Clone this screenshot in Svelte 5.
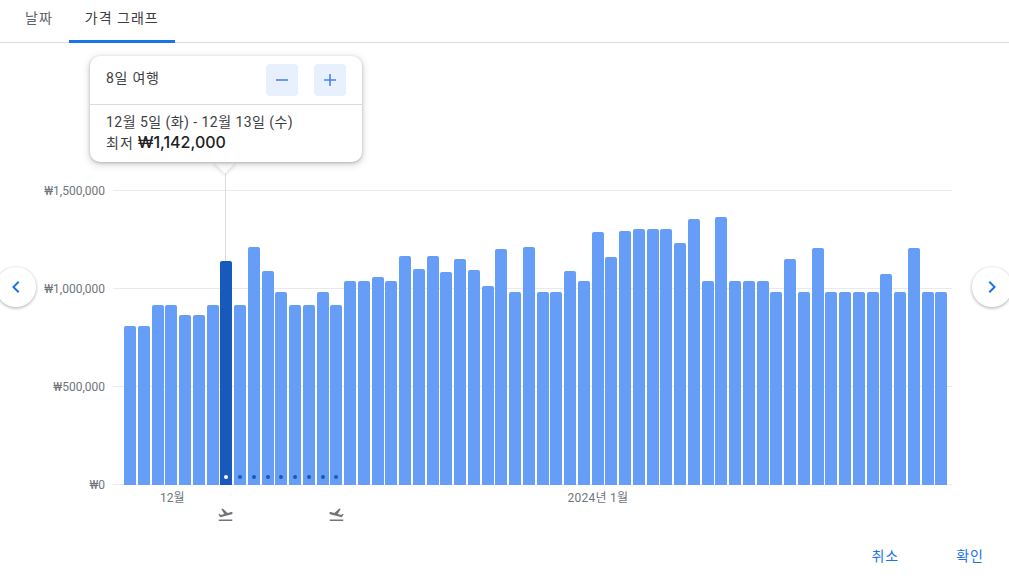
<script>
  const tops = [326,326,305,305,315,315,305,261,305,247,271,292,305,305,292,305,281,281,277,281,256,269,256,272,259,270,286,249,292,247,292,292,271,281,232,257,231,229,229,229,243,219,281,217,281,281,281,292,259,292,248,292,292,292,292,274,292,248,292,292];
  const bars = tops.map((t, i) => ({ h: 485 - t, sel: i === 7, dot: i >= 7 && i <= 15 }));
  const yLabels = ['₩1,500,000', '₩1,000,000', '₩500,000', '₩0'];
</script>

<div class="page">
  <nav class="tabs">
    <button class="tab">날짜</button>
    <button class="tab active">가격 그래프</button>
  </nav>

  <section class="chart">
    <div class="axis">
      {#each yLabels as l}
        <div class="ylabel">{l}</div>
      {/each}
    </div>
    <div class="plot">
      <div class="grid">
        {#each yLabels as l}<div class="gridline"></div>{/each}
      </div>
      <div class="bars">
        {#each bars as b}
          <div class="bar" class:sel={b.sel} style="height:{b.h}px">
            {#if b.dot}<span class="dot"></span>{/if}
          </div>
        {/each}
      </div>
      <div class="months">
        <span class="m1">12월</span>
        <span class="m2">2024년 1월</span>
      </div>
      <div class="planes">
        <svg class="plane" viewBox="0 0 24 24"><path d="M2.5 19h19v2h-19zm19.57-9.36c-.21-.8-1.04-1.28-1.84-1.06L14.92 10l-6.9-6.43-1.93.51 4.14 7.17-4.97 1.33-1.97-1.54-1.45.39 1.82 3.16.77 1.33 1.6-.43 5.31-1.42 4.35-1.16L21 11.49c.81-.23 1.28-1.05 1.07-1.85z"/></svg>
        <svg class="plane back" viewBox="0 0 24 24"><path d="M2.5 19h19v2h-19zm19.57-9.36c-.21-.8-1.04-1.28-1.84-1.06L14.92 10l-6.9-6.43-1.93.51 4.14 7.17-4.97 1.33-1.97-1.54-1.45.39 1.82 3.16.77 1.33 1.6-.43 5.31-1.42 4.35-1.16L21 11.49c.81-.23 1.28-1.05 1.07-1.85z"/></svg>
      </div>
    </div>
  </section>

  <footer class="foot">
    <button class="action">취소</button>
    <button class="action">확인</button>
  </footer>

  <div class="leader"></div>
  <div class="pop">
    <div class="pop-head">
      <span class="trip">8일 여행</span>
      <div class="steppers">
        <button class="step" aria-label="minus"><svg viewBox="0 0 12 12"><path d="M0 5.2h12v1.6H0z"/></svg></button>
        <button class="step" aria-label="plus"><svg viewBox="0 0 12 12"><path d="M5.2 0h1.6v5.2H12v1.6H6.8V12H5.2V6.8H0V5.2h5.2z"/></svg></button>
      </div>
    </div>
    <div class="pop-body">
      <div class="dates">12월 5일 (화) - 12월 13일 (수)</div>
      <div class="price-line"><span class="low">최저</span> <b>₩1,142,000</b></div>
    </div>
    <span class="arrow"></span>
  </div>

  <button class="nav left" aria-label="prev"><svg viewBox="0 0 24 24"><path d="M15.4 7.4 14 6l-6 6 6 6 1.4-1.4-4.6-4.6z"/></svg></button>
  <button class="nav right" aria-label="next"><svg viewBox="0 0 24 24"><path d="M8.6 16.6 10 18l6-6-6-6-1.4 1.4 4.6 4.6z"/></svg></button>
</div>

<style>
  :global(body) { margin: 0; background: #fff; }
  .page {
    position: relative;
    width: 1009px;
    height: 579px;
    overflow: hidden;
    font-family: Roboto, "Noto Sans CJK KR", sans-serif;
    color: #3c4043;
  }
  button { font: inherit; border: 0; background: none; padding: 0; }

  .tabs {
    display: flex;
    height: 42px;
    border-bottom: 1px solid #dadce0;
  }
  .tab {
    position: relative;
    padding: 0 16px;
    font-size: 14px;
    letter-spacing: 1px;
    color: #5f6368;
    height: 33px;
    margin-bottom: 9px;
  }
  .tab:first-child { padding: 0 16px 0 25px; }
  .tab.active { color: #3c4043; }
  .tab.active::after {
    content: "";
    position: absolute;
    left: 0;
    right: 0;
    top: 40px;
    height: 3px;
    background: #1a73e8;
  }

  .chart {
    display: flex;
    margin-top: 147px;
    height: 345px;
  }
  .axis {
    width: 105px;
    display: flex;
    flex-direction: column;
    justify-content: space-between;
    height: 310px;
    margin-top: -7px;
    box-sizing: border-box;
  }
  .ylabel {
    font-size: 12px;
    line-height: 16px;
    color: #70757a;
    text-align: right;
  }
  .plot {
    position: relative;
    width: 848px;
    margin-left: 8px;
    height: 345px;
  }
  .grid {
    position: absolute;
    inset: 0 auto auto 0;
    width: 839px;
    height: 295px;
    display: flex;
    flex-direction: column;
    justify-content: space-between;
  }
  .gridline { height: 1px; background: #e8eaed; }
  .bars {
    position: absolute;
    left: 11px;
    top: 0;
    width: 824px;
    height: 295px;
    display: flex;
    align-items: flex-end;
    justify-content: space-between;
  }
  .bar {
    position: relative;
    width: 12px;
    background: #669df6;
    border-radius: 2px 2px 0 0;
  }
  .bar.sel { background: #185abc; }
  .dot {
    position: absolute;
    left: 4px;
    bottom: 6px;
    width: 4px;
    height: 4px;
    border-radius: 50%;
    background: #185abc;
  }
  .bar.sel .dot { background: #fff; }
  .months {
    position: absolute;
    top: 300px;
    left: 0;
    font-size: 12px;
    line-height: 16px;
    color: #70757a;
    display: flex;
  }
  .m1 { margin-left: 47px; }
  .m2 { margin-left: 383px; letter-spacing: .25px; }
  .planes {
    position: absolute;
    top: 316px;
    left: 104px;
    display: flex;
    gap: 93.5px;
  }
  .plane { width: 17px; height: 17px; fill: #70757a; display: block; }
  .plane.back { transform: scaleX(-1); }

  .foot {
    position: absolute;
    top: 546px;
    right: 25px;
    display: flex;
    gap: 57px;
  }
  .action { font-size: 14px; line-height: 20px; color: #1a73e8; letter-spacing: 1px; }

  .leader {
    position: absolute;
    left: 225px;
    top: 173px;
    width: 1px;
    height: 88px;
    background: #dadce0;
  }
  .pop {
    position: absolute;
    left: 90px;
    top: 56px;
    width: 272px;
    height: 106px;
    background: #fff;
    border-radius: 10px;
    box-shadow: 0 1px 3px rgba(60,64,67,.3), 0 2px 6px 2px rgba(60,64,67,.15);
    font-size: 14px;
  }
  .arrow {
    position: absolute;
    left: 127.25px;
    bottom: -7.75px;
    width: 15.5px;
    height: 15.5px;
    background: #fff;
    transform: rotate(45deg);
    box-shadow: 2px 2px 3px rgba(60,64,67,.12);
    z-index: -1;
  }
  .pop-head {
    display: flex;
    align-items: center;
    justify-content: space-between;
    height: 48px;
    padding: 0 16px;
    border-bottom: 1px solid #dadce0;
  }
  .trip { margin-bottom: 6px; letter-spacing: .75px; }
  .steppers { display: flex; gap: 16px; }
  .step {
    width: 32px;
    height: 32px;
    border-radius: 4px;
    background: #e8f0fe;
    display: flex;
    align-items: center;
    justify-content: center;
  }
  .step svg { width: 12px; height: 12px; fill: #4285f4; }
  .pop-body { padding: 7px 16px 0; line-height: 20px; }
  .dates { letter-spacing: .45px; }
  .low { letter-spacing: 1.2px; }
  .price-line b { font-family: Inter, Roboto, sans-serif; font-weight: 500; font-size: 16px; color: #202124; }

  .nav {
    position: absolute;
    top: 267px;
    width: 40px;
    height: 40px;
    border-radius: 50%;
    background: #fff;
    box-shadow: 0 1px 3px rgba(60,64,67,.3), 0 1px 3px 1px rgba(60,64,67,.1);
    display: flex;
    align-items: center;
    justify-content: center;
  }
  .nav svg { width: 24px; height: 24px; fill: #1a73e8; }
  .nav.left { left: -4px; }
  .nav.right { left: 972px; }
</style>
